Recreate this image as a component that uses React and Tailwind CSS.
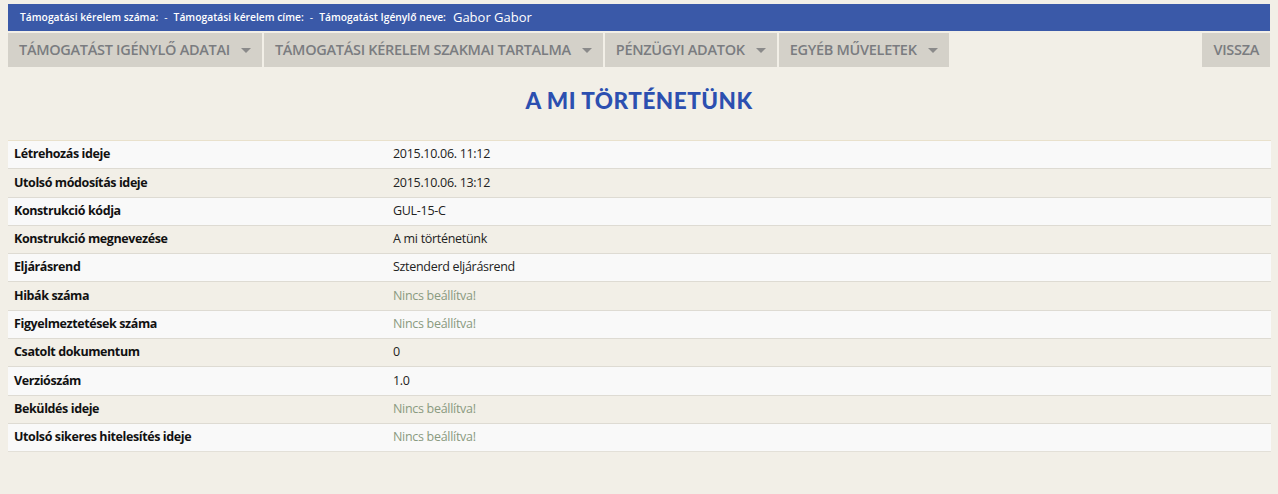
import React from "react";

const rows = [
  ["Létrehozás ideje", "2015.10.06. 11:12"],
  ["Utolsó módosítás ideje", "2015.10.06. 13:12"],
  ["Konstrukció kódja", "GUL-15-C"],
  ["Konstrukció megnevezése", "A mi történetünk"],
  ["Eljárásrend", "Sztenderd eljárásrend"],
  ["Hibák száma", null],
  ["Figyelmeztetések száma", null],
  ["Csatolt dokumentum", "0"],
  ["Verziószám", "1.0"],
  ["Beküldés ideje", null],
  ["Utolsó sikeres hitelesítés ideje", null],
];

function Caret() {
  return (
    <svg width="10" height="6" viewBox="0 0 10 6" className="ml-[11px] mt-[1px]">
      <path d="M0 0 L10 0 L5 5 Z" fill="#8a8a8a" />
    </svg>
  );
}

function NavBtn({ label, caret = true }) {
  return (
    <div className="flex items-center h-[34px] px-[11px] bg-[#d4d1c9] text-[#7a7c80] text-[14.5px] font-semibold tracking-[-0.3px] uppercase">
      <span>{label}</span>
      {caret && <Caret />}
    </div>
  );
}

export default function App() {
  return (
    <div
      className="w-[1278px] h-[494px] bg-[#f2efe7] px-[8px] pt-[4px]"
      style={{ fontFamily: '"Open Sans", "Noto Sans", sans-serif' }}
    >
      <div className="h-[27px] bg-[#3a59a8] flex items-center pl-[12px] text-white">
        <span className="text-[10.3px] font-semibold">Támogatási kérelem száma:</span>
        <span className="text-[10.3px] mx-[6px]">-</span>
        <span className="text-[10.3px] font-semibold">Támogatási kérelem címe:</span>
        <span className="text-[10.3px] mx-[6px]">-</span>
        <span className="text-[10.3px] font-semibold">Támogatást Igénylő neve:</span>
        <span className="text-[13px] ml-[7px]">Gabor Gabor</span>
      </div>
      <div className="flex mt-[2px] gap-[2px]">
        <NavBtn label="Támogatást igénylő adatai" />
        <NavBtn label="Támogatási kérelem szakmai tartalma" />
        <NavBtn label="Pénzügyi adatok" />
        <NavBtn label="Egyéb műveletek" />
        <div className="flex-1" />
        <NavBtn label="Vissza" caret={false} />
      </div>
      <h1
        className="text-center text-[#2c4fb0] text-[22.5px] font-black mt-[19px] leading-[30px] tracking-[0.5px]"
        style={{ fontFamily: 'Lato, "Open Sans", sans-serif' }}
      >
        A MI TÖRTÉNETÜNK
      </h1>
      <div className="mt-[24px] mr-[-1px] border-b border-[#e3e0d8]">
        {rows.map(([label, value], i) => (
          <div
            key={label}
            className={`flex h-[28.3px] items-center border-t ${
              i === 0 ? "border-[#e9e1cc]" : "border-[#dedbd3]"
            } ${i % 2 === 0 ? "bg-[#f9f9f9]" : ""}`}
          >
            <div className="w-[385px] pl-[6px] text-[12.5px] font-bold text-[#111] tracking-[-0.4px]">
              {label}
            </div>
            <div
              className={`text-[12.5px] tracking-[-0.3px] ${
                value === null ? "text-[#8a9a80]" : "text-[#222]"
              }`}
            >
              {value === null ? "Nincs beállítva!" : value}
            </div>
          </div>
        ))}
      </div>
    </div>
  );
}
